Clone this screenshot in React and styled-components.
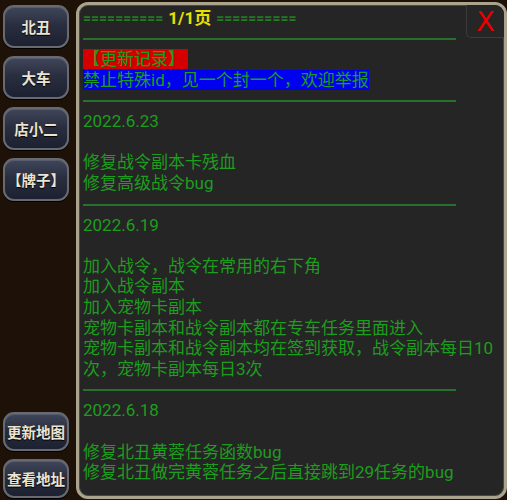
import React from 'react'
import styled, { createGlobalStyle } from 'styled-components'

const Global = createGlobalStyle`
  html, body {
    margin: 0;
    padding: 0;
    background: #1e1108;
  }
`

const Screen = styled.div`
  width: 507px;
  height: 500px;
  overflow: hidden;
  display: flex;
  background: #1e1108;
  font-family: Roboto, "Noto Sans CJK SC", sans-serif;
`

const Sidebar = styled.div`
  width: 76px;
  flex-shrink: 0;
  box-sizing: border-box;
  padding: 5px 0 2px 3px;
  display: flex;
  flex-direction: column;
  gap: 8px;
`

const Spacer = styled.div`
  flex: 1;
`

const SideButton = styled.button`
  width: 66px;
  height: ${p => p.$h || 43}px;
  flex-shrink: 0;
  box-sizing: border-box;
  border: 2px solid #686a72;
  border-radius: 11px;
  background: linear-gradient(#40465a 0%, #2a2f40 45%, #1c2030 100%);
  box-shadow: inset 0 1px 0 rgba(255, 255, 255, 0.12), 0 1px 0 #000;
  color: #ece4d2;
  font-family: "Noto Sans CJK SC", sans-serif;
  font-size: 14.5px;
  font-weight: 700;
  text-shadow: 0 1px 1px #000;
  padding: 0;
  cursor: pointer;
  white-space: nowrap;
`

const Panel = styled.div`
  position: relative;
  flex: 1;
  margin-top: 2px;
  height: 497px;
  box-sizing: border-box;
  border: 3px solid #aaa48e;
  border-radius: 12px;
  background: #252525;
  box-shadow: inset 0 0 0 1px #4a4840;
  padding: 3px 0 0 4px;
`

const CloseBox = styled.button`
  position: absolute;
  top: 0;
  right: 0;
  width: 38px;
  height: 33px;
  border: none;
  border-left: 1px solid #3c3c3c;
  border-bottom: 1px solid #3c3c3c;
  border-radius: 0 9px 0 5px;
  background: #262626;
  color: #e80000;
  font-family: "DejaVu Sans", sans-serif;
  font-size: 27px;
  line-height: 31px;
  padding: 0;
  cursor: pointer;
`

const Line = styled.div`
  color: #1d9d1d;
  font-size: 17px;
  line-height: 20.6px;
  height: 20.6px;
  white-space: nowrap;
`

const Header = styled(Line)`
  display: flex;
  align-items: center;
  gap: 5px;
`

const Equals = styled.span`
  color: #1d7e1d;
  font-size: 14px;
  font-weight: 700;
`

const Page = styled.span`
  color: #e6e000;
  font-weight: 700;
`

const Mark = styled.span`
  display: inline-block;
  background: ${p => p.$bg};
  line-height: 20px;
  height: 20px;
  padding-right: ${p => p.$pad || 0}px;
`

const Rule = styled.div`
  width: 373px;
  height: 2px;
  background: #27702d;
  margin: ${p => p.$top || 9.5}px 0 9px;
`

const Blank = styled.div`
  height: 20.6px;
`

const logs = [
  {
    date: '2022.6.23',
    items: ['修复战令副本卡残血', '修复高级战令bug'],
  },
  {
    date: '2022.6.19',
    items: [
      '加入战令，战令在常用的右下角',
      '加入战令副本',
      '加入宠物卡副本',
      '宠物卡副本和战令副本都在专车任务里面进入',
      '宠物卡副本和战令副本均在签到获取，战令副本每日10',
      '次，宠物卡副本每日3次',
    ],
  },
  {
    date: '2022.6.18',
    items: ['修复北丑黄蓉任务函数bug', '修复北丑做完黄蓉任务之后直接跳到29任务的bug'],
  },
]

const App = () => {
  return (
    <Screen>
      <Global />
      <Sidebar>
        <SideButton>北丑</SideButton>
        <SideButton>大车</SideButton>
        <SideButton>店小二</SideButton>
        <SideButton>【牌子】</SideButton>
        <Spacer />
        <SideButton $h={39}>更新地图</SideButton>
        <SideButton $h={39}>查看地址</SideButton>
      </Sidebar>
      <Panel>
        <CloseBox>X</CloseBox>
        <Header>
          <Equals>==========</Equals>
          <Page>1/1页</Page>
          <Equals>==========</Equals>
        </Header>
        <Rule />
        <Line>
          <Mark $bg="#d40000" $pad={3}>【更新记录】</Mark>
        </Line>
        <Line>
          <Mark $bg="#0000f0">禁止特殊id，见一个封一个，欢迎举报</Mark>
        </Line>
        {logs.map(log => (
          <React.Fragment key={log.date}>
            <Rule $top={10} />
            <Line>{log.date}</Line>
            <Blank />
            {log.items.map(item => (
              <Line key={item}>{item}</Line>
            ))}
          </React.Fragment>
        ))}
      </Panel>
    </Screen>
  )
}

export default App
